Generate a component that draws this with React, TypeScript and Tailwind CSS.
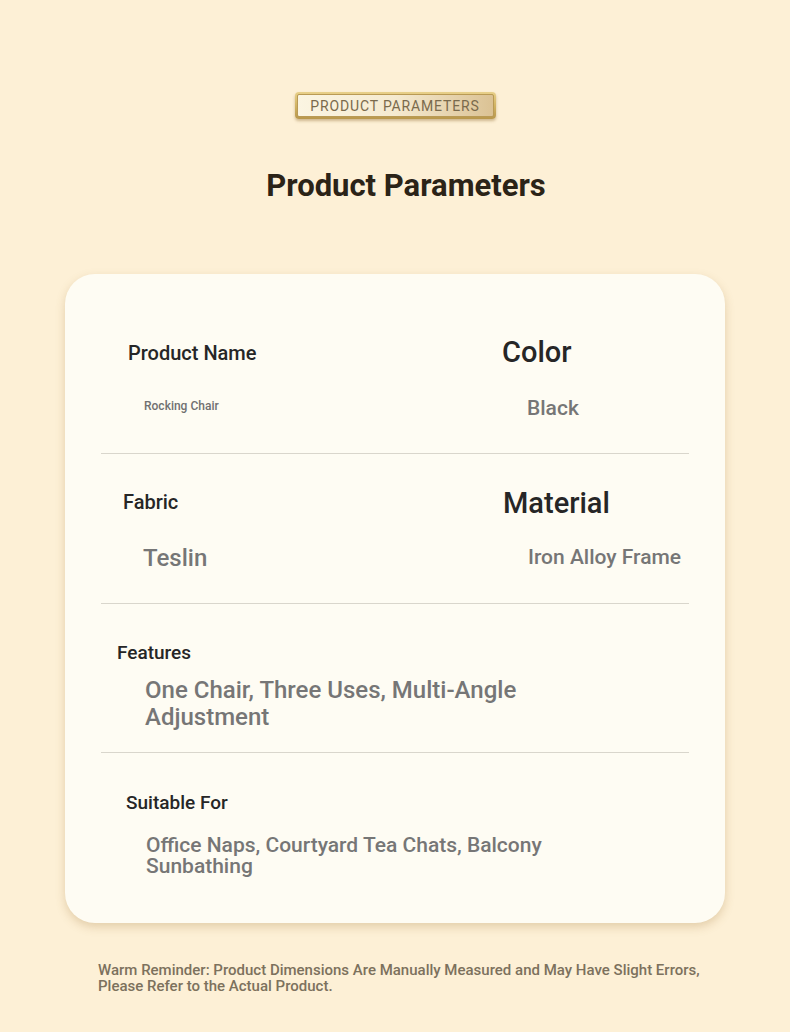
export default function App() {
  return (
    <div
      className="w-[790px] h-[1032px] bg-[#fdf0d6] flex flex-col items-center pt-[92px]"
      style={{ fontFamily: "Roboto, 'Liberation Sans', sans-serif" }}
    >
      {/* badge */}
      <div className="h-[27px] w-[201px] rounded-[4px] p-[2px] bg-gradient-to-b from-[#e8d08a] via-[#d2b463] to-[#b8974c] shadow-[0_2px_3px_rgba(150,115,55,0.45)]">
        <div className="h-full w-full rounded-[2px] border border-[#b99a55] bg-gradient-to-r from-[#fbf5e2] via-[#f5ead0] to-[#dbc294] flex items-center justify-center">
          <span className="text-[14px] leading-none tracking-[0.06em] text-[#7a6a4c]">PRODUCT PARAMETERS</span>
        </div>
      </div>

      <h1 className="mt-[49px] pl-[22px] text-[31px] leading-[36px] font-bold text-[#2b2317]">Product Parameters</h1>

      {/* card */}
      <div className="mt-[70px] w-[660px] rounded-[30px] bg-[#fefcf3] px-[36px] shadow-[0_4px_10px_rgba(170,130,70,0.3)]">
        <div className="h-[180px] border-b border-[#d9d6cc] flex">
          <div className="w-[389px] flex flex-col pt-[67px]">
            <div className="ml-[27px] text-[20px] leading-[24px] font-medium text-[#262626]">Product Name</div>
            <div className="ml-[43px] mt-[33px] text-[12px] leading-[16px] font-medium text-[#707070]">Rocking Chair</div>
          </div>
          <div className="flex flex-col pt-[61px]">
            <div className="ml-[12px] text-[29px] leading-[34px] font-medium text-[#262626]">Color</div>
            <div className="ml-[37px] mt-[26px] text-[21px] leading-[26px] font-medium text-[#767676]">Black</div>
          </div>
        </div>

        <div className="h-[150px] border-b border-[#d9d6cc] flex">
          <div className="w-[389px] flex flex-col pt-[36px]">
            <div className="ml-[22px] text-[20px] leading-[24px] font-medium text-[#262626]">Fabric</div>
            <div className="ml-[42px] mt-[29px] text-[24px] leading-[30px] font-medium text-[#767676]">Teslin</div>
          </div>
          <div className="flex flex-col pt-[32px]">
            <div className="ml-[13px] text-[29px] leading-[34px] font-medium text-[#262626]">Material</div>
            <div className="ml-[38px] mt-[24px] text-[21px] leading-[26px] font-medium text-[#767676]">Iron Alloy Frame</div>
          </div>
        </div>

        <div className="h-[149px] border-b border-[#d9d6cc] flex flex-col pt-[37px]">
          <div className="ml-[16px] text-[19px] leading-[24px] font-medium text-[#262626]">Features</div>
          <div className="ml-[44px] mt-[12px] w-[430px] text-[24px] leading-[27px] font-medium text-[#767676]">
            One Chair, Three Uses, Multi-Angle Adjustment
          </div>
        </div>

        <div className="h-[170px] flex flex-col pt-[38px]">
          <div className="ml-[25px] text-[19px] leading-[24px] font-medium text-[#262626]">Suitable For</div>
          <div className="ml-[45px] mt-[20px] w-[480px] text-[21px] leading-[21px] font-medium text-[#767676]">
            Office Naps, Courtyard Tea Chats, Balcony Sunbathing
          </div>
        </div>
      </div>

      <p className="mt-[39px] self-start ml-[98px] w-[612px] text-[15px] leading-[16px] font-medium text-[#7c715d]">
        Warm Reminder: Product Dimensions Are Manually Measured and May Have Slight Errors, Please Refer to the Actual Product.
      </p>
    </div>
  );
}
